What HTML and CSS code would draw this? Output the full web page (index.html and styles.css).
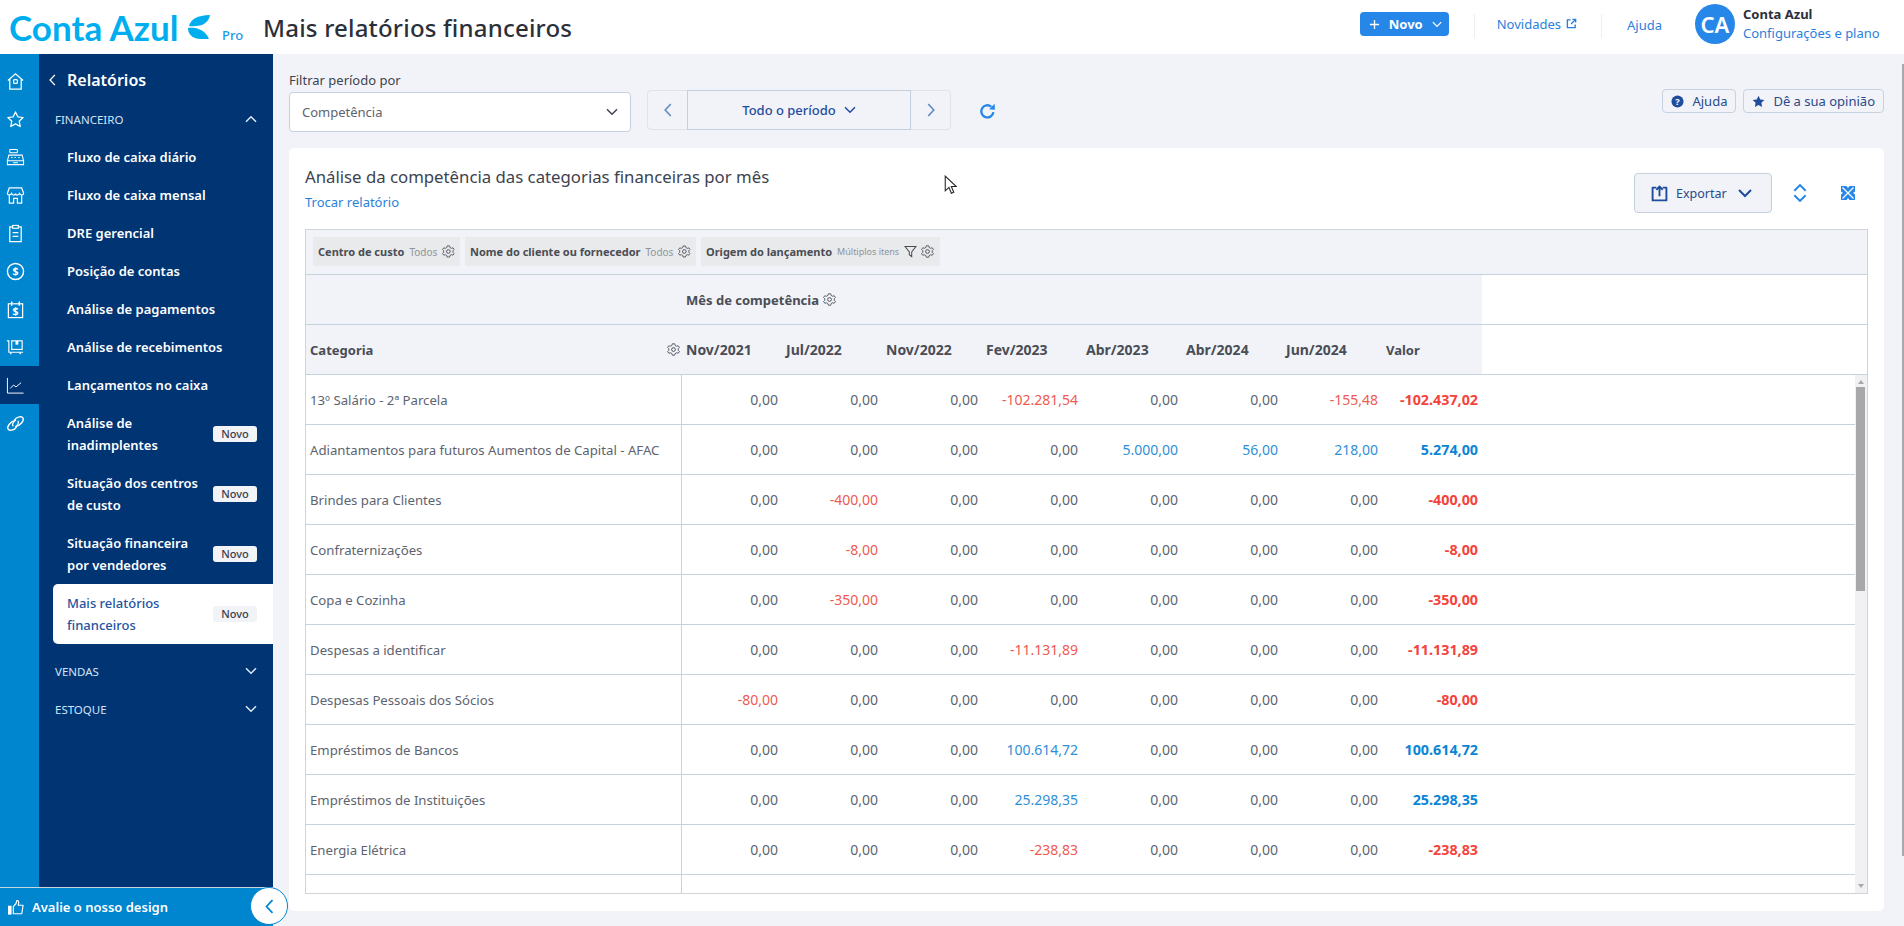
FILE: index.html
```html
<!DOCTYPE html>
<html lang="pt-BR">
<head>
<meta charset="utf-8">
<title>Mais relatórios financeiros</title>
<link rel="stylesheet" href="styles.css">
</head>
<body>
<svg class="defs" width="0" height="0" aria-hidden="true">
  <symbol id="gear" viewBox="0 0 16 16"><path d="M6.500 1H9.500L10 3L11.800 4L13.800 3.400L15.300 5.500L13.800 7V9L15.300 10.500L13.800 12.600L11.800 12L10 13L9.500 15H6.500L6 13L4.200 12L2.200 12.600L.7 10.500L2.200 9V7L.7 5.500L2.200 3.400L4.200 4L6 3Z" fill="none" stroke="currentColor" stroke-width="1.100" stroke-linejoin="round"/><circle cx="8" cy="8" r="2.300" fill="none" stroke="currentColor" stroke-width="1.200"/></symbol>
  <symbol id="chev-d" viewBox="0 0 12 8"><path d="M1 1.200l5 5 5-5" fill="none" stroke="currentColor" stroke-width="1.500"/></symbol>
  <symbol id="chev-u" viewBox="0 0 12 8"><path d="M1 6.800l5-5 5 5" fill="none" stroke="currentColor" stroke-width="1.500"/></symbol>
  <symbol id="chev-l" viewBox="0 0 8 14"><path d="M6.800 1L1.200 7l5.600 6" fill="none" stroke="currentColor" stroke-width="1.600"/></symbol>
  <symbol id="chev-r" viewBox="0 0 8 14"><path d="M1.200 1l5.600 6-5.600 6" fill="none" stroke="currentColor" stroke-width="1.600"/></symbol>
</svg>

<header class="topbar">
  <div class="brand">
    <span class="logo-text">Conta Azul</span>
    <svg class="logo-mark" viewBox="0 0 24 24"><path d="M3 11C5 4 11 .5 24 0c-.5 5-5 9.500-10 10.500C10 11.300 6 11.300 3 11z" fill="#00aeef"/><path d="M2 13c4-.4 8 0 11 1.200 5 1.800 8 5 10 9.800-9 .3-15 0-18-3.500C3 18.500 2 16 2 13z" fill="#00aeef"/></svg>
    <span class="logo-pro">Pro</span>
  </div>
  <h1 class="page-title">Mais relatórios financeiros</h1>
  <div class="top-actions">
    <button class="btn-new"><svg class="plus" viewBox="0 0 12 12"><path d="M6 1v10M1 6h10" stroke="#fff" stroke-width="1.500"/></svg><span>Novo</span><svg class="ic-9" width="10" height="7"><use href="#chev-d"/></svg></button>
    <span class="vline vline-a"></span>
    <a class="top-link novidades">Novidades <svg class="ext" viewBox="0 0 12 12"><path d="M5 2H1.500v8.500H10V7M7 1.500h3.500V5M10.500 1.500L5.500 6.500" fill="none" stroke="currentColor" stroke-width="1.500"/></svg></a>
    <span class="vline vline-b"></span>
    <a class="top-link ajuda-top">Ajuda</a>
    <span class="avatar">CA</span>
    <div class="user">
      <strong>Conta Azul</strong>
      <a>Configurações e plano</a>
    </div>
  </div>
</header>

<div class="shell">
  <aside class="rail">
    <ul class="rail-list">
      <li><svg viewBox="0 0 20 20"><path d="M2 9l8-7 8 7M4 7.500V18h12V7.500" fill="none" stroke="#fff" stroke-width="1.300"/><rect x="8" y="8" width="4" height="4" rx="1" fill="none" stroke="#fff" stroke-width="1.300"/></svg></li>
      <li><svg viewBox="0 0 20 20"><path d="M10 2l2.400 5.200 5.600.7-4.100 3.900 1.100 5.600-5-2.800-5 2.800 1.100-5.600L2 7.900l5.600-.7z" fill="none" stroke="#fff" stroke-width="1.300" stroke-linejoin="round"/></svg></li>
      <li><svg viewBox="0 0 20 20"><rect x="4" y="1.500" width="8" height="3.500" rx=".7" fill="none" stroke="#fff" stroke-width="1.100"/><path d="M3 7.500h14l1.500 6H1.500zM1.500 13.500h17v4h-17z" fill="none" stroke="#fff" stroke-width="1.100"/><path d="M5.500 10h1.500M9 10h1.500M13 10h1.500M7.500 15.500h5" stroke="#fff" stroke-width="1.100"/></svg></li>
      <li><svg viewBox="0 0 20 20"><path d="M3.500 2h13l2 5.500c0 2.500-3.500 2.500-4.300.5-.8 2-3.700 2-4.200 0-.5 2-3.400 2-4.200 0-.8 2-4.300 2-4.300-.5zM3.500 10v8h4.500v-5h4v5h4.500v-8" fill="none" stroke="#fff" stroke-width="1.300"/></svg></li>
      <li><svg viewBox="0 0 20 20"><path d="M7 3H4v15.500h12V3h-3" fill="none" stroke="#fff" stroke-width="1.300"/><rect x="7" y="1.500" width="6" height="3" fill="none" stroke="#fff" stroke-width="1.200"/><path d="M7 9h6M7 13h6" stroke="#fff" stroke-width="1.300"/></svg></li>
      <li><svg viewBox="0 0 20 20"><circle cx="10" cy="10" r="8.500" fill="none" stroke="#fff" stroke-width="1.500"/><text x="10" y="14" class="dollar">$</text></svg></li>
      <li><svg viewBox="0 0 20 20"><rect x="2.500" y="4" width="15" height="14.500" fill="none" stroke="#fff" stroke-width="1.300"/><path d="M6 1.500V6M14 1.500V6" stroke="#fff" stroke-width="1.500"/><text x="10" y="15.500" class="dollar">$</text></svg></li>
      <li><svg viewBox="0 0 20 20"><path d="M1 3h2v12h15" fill="none" stroke="#fff" stroke-width="1.200"/><rect x="6" y="3" width="11" height="9" fill="none" stroke="#fff" stroke-width="1.200"/><rect x="10" y="3" width="3" height="4" fill="#fff"/><path d="M5 15v2M15 15v2" stroke="#fff" stroke-width="1.500"/></svg></li>
      <li class="rail-on"><svg viewBox="0 0 20 20"><path d="M1.500 2v16h17" fill="none" stroke="#fff" stroke-width="1"/><path d="M4.500 13l3.500-3.500 2.500 2 5.500-4.500" fill="none" stroke="#fff" stroke-width="1"/></svg></li>
      <li><svg viewBox="0 0 20 20"><path d="M9 6.500C11 2.500 17 2 18 4.500s-3 8-7.500 8.500M11 13.500C9 17.500 3 18 2 15.500S5 7.500 9.500 7" fill="none" stroke="#fff" stroke-width="1.500" stroke-linecap="round"/><path d="M7.500 13c-1.500-2 .5-6 3-6.500M12.500 7c1.500 2-.5 6-3 6.500" fill="none" stroke="#fff" stroke-width="1.300"/></svg></li>
    </ul>
  </aside>

  <nav class="sidenav">
    <div class="nav-head"><svg class="back" width="7" height="12"><use href="#chev-l"/></svg><span>Relatórios</span></div>
    <div class="nav-group"><span>FINANCEIRO</span><svg width="12" height="8"><use href="#chev-u"/></svg></div>
    <ul class="nav-items">
      <li>Fluxo de caixa diário</li>
      <li>Fluxo de caixa mensal</li>
      <li>DRE gerencial</li>
      <li>Posição de contas</li>
      <li>Análise de pagamentos</li>
      <li>Análise de recebimentos</li>
      <li>Lançamentos no caixa</li>
      <li class="two"><span>Análise de<br>inadimplentes</span><em>Novo</em></li>
      <li class="two"><span>Situação dos centros<br>de custo</span><em>Novo</em></li>
      <li class="two"><span>Situação financeira<br>por vendedores</span><em>Novo</em></li>
      <li class="two active"><span>Mais relatórios<br>financeiros</span><em>Novo</em></li>
    </ul>
    <div class="nav-group"><span>VENDAS</span><svg width="12" height="8"><use href="#chev-d"/></svg></div>
    <div class="nav-group"><span>ESTOQUE</span><svg width="12" height="8"><use href="#chev-d"/></svg></div>
  </nav>

  <main class="content">
    <div class="filters">
      <div class="period-by">
        <label>Filtrar período por</label>
        <div class="select"><span>Competência</span><svg width="12" height="8"><use href="#chev-d"/></svg></div>
      </div>
      <div class="pager">
        <span class="pg-side"><svg width="8" height="14"><use href="#chev-l"/></svg></span>
        <span class="pg-mid">Todo o período <svg width="12" height="8"><use href="#chev-d"/></svg></span>
        <span class="pg-side"><svg width="8" height="14"><use href="#chev-r"/></svg></span>
      </div>
      <svg class="refresh" viewBox="0 0 16 16"><path d="M13.500 8.500A5.700 5.700 0 1 1 11.500 3.500" fill="none" stroke="#2687e9" stroke-width="2.200"/><path d="M9.500 5.800L15 6.300 14.700.8z" fill="#2687e9"/></svg>
      <div class="help-btns">
        <button class="ghost"><svg viewBox="0 0 14 14"><circle cx="7" cy="7" r="6.500" fill="#1f4c9c"/><text x="7" y="10.500" class="q">?</text></svg>Ajuda</button>
        <button class="ghost"><svg viewBox="0 0 14 14"><path d="M7 .8l1.900 4 4.400.6-3.200 3 .8 4.400L7 10.700l-3.900 2.100.8-4.400-3.200-3 4.400-.6z" fill="#1f4c9c"/></svg>Dê a sua opinião</button>
      </div>
    </div>

    <section class="card">
      <div class="card-head">
        <div>
          <h2>Análise da competência das categorias financeiras por mês</h2>
          <a class="swap">Trocar relatório</a>
        </div>
        <div class="card-tools">
          <button class="export"><svg class="up" viewBox="0 0 16 16"><path d="M5 2.500H1.500v12h13v-12H11" fill="none" stroke="#1f4c9c" stroke-width="1.800" stroke-linejoin="round"/><path d="M8 10.500V1.500M5 4.500L8 1.500l3 3" fill="none" stroke="#1f4c9c" stroke-width="1.800"/></svg>Exportar<svg class="exp-ch" viewBox="0 0 14 9"><path d="M1 1l6 6 6-6" fill="none" stroke="#1f4c9c" stroke-width="2"/></svg></button>
          <svg class="tool expand" viewBox="0 0 12 16"><path d="M1 6l5-5 5 5M1 10l5 5 5-5" fill="none" stroke="#2687e9" stroke-width="1.800"/></svg>
          <svg class="tool full" viewBox="0 0 14 14"><rect width="14" height="14" fill="#2687e9"/><path d="M1.500 1.500l11 11M12.500 1.500l-11 11" stroke="#fff" stroke-width="1.200"/><path d="M7 2L5.500 0h3zM7 12l-1.500 2h3zM2 7L0 5.500v3zM12 7l2-1.500v3z" fill="#fff"/></svg>
        </div>
      </div>

      <div class="pivot">
        <div class="chips">
          <span class="chip c1"><b>Centro de custo</b><i>Todos</i><svg><use href="#gear"/></svg></span>
          <span class="chip c2"><b>Nome do cliente ou fornecedor</b><i>Todos</i><svg><use href="#gear"/></svg></span>
          <span class="chip c3"><b>Origem do lançamento</b><i class="mini">Múltiplos itens</i><svg class="funnel" viewBox="0 0 14 14"><path d="M1 1.500h12L8.300 7.500v5L5.700 10.500v-3z" fill="none" stroke="currentColor" stroke-width="1.100"/></svg><svg><use href="#gear"/></svg></span>
        </div>
        <div class="hrow hrow-month"><div class="hband"><span class="hmonth">Mês de competência</span><svg><use href="#gear"/></svg></div></div>
        <div class="hrow hrow-cols"><div class="hband cols">
          <span class="hcat">Categoria<svg><use href="#gear"/></svg></span>
          <span class="m">Nov/2021</span><span class="m">Jul/2022</span><span class="m">Nov/2022</span><span class="m">Fev/2023</span><span class="m">Abr/2023</span><span class="m">Abr/2024</span><span class="m">Jun/2024</span><span>Valor</span>
        </div></div>
        <div class="body">
          <div class="rows">
            <div class="row"><span class="cat">13º Salário - 2ª Parcela</span><span>0,00</span><span>0,00</span><span>0,00</span><span class="neg">-102.281,54</span><span>0,00</span><span>0,00</span><span class="neg">-155,48</span><span class="tot neg">-102.437,02</span></div>
            <div class="row"><span class="cat">Adiantamentos para futuros Aumentos de Capital - AFAC</span><span>0,00</span><span>0,00</span><span>0,00</span><span>0,00</span><span class="pos">5.000,00</span><span class="pos">56,00</span><span class="pos">218,00</span><span class="tot pos">5.274,00</span></div>
            <div class="row"><span class="cat">Brindes para Clientes</span><span>0,00</span><span class="neg">-400,00</span><span>0,00</span><span>0,00</span><span>0,00</span><span>0,00</span><span>0,00</span><span class="tot neg">-400,00</span></div>
            <div class="row"><span class="cat">Confraternizações</span><span>0,00</span><span class="neg">-8,00</span><span>0,00</span><span>0,00</span><span>0,00</span><span>0,00</span><span>0,00</span><span class="tot neg">-8,00</span></div>
            <div class="row"><span class="cat">Copa e Cozinha</span><span>0,00</span><span class="neg">-350,00</span><span>0,00</span><span>0,00</span><span>0,00</span><span>0,00</span><span>0,00</span><span class="tot neg">-350,00</span></div>
            <div class="row"><span class="cat">Despesas a identificar</span><span>0,00</span><span>0,00</span><span>0,00</span><span class="neg">-11.131,89</span><span>0,00</span><span>0,00</span><span>0,00</span><span class="tot neg">-11.131,89</span></div>
            <div class="row"><span class="cat">Despesas Pessoais dos Sócios</span><span class="neg">-80,00</span><span>0,00</span><span>0,00</span><span>0,00</span><span>0,00</span><span>0,00</span><span>0,00</span><span class="tot neg">-80,00</span></div>
            <div class="row"><span class="cat">Empréstimos de Bancos</span><span>0,00</span><span>0,00</span><span>0,00</span><span class="pos">100.614,72</span><span>0,00</span><span>0,00</span><span>0,00</span><span class="tot pos">100.614,72</span></div>
            <div class="row"><span class="cat">Empréstimos de Instituições</span><span>0,00</span><span>0,00</span><span>0,00</span><span class="pos">25.298,35</span><span>0,00</span><span>0,00</span><span>0,00</span><span class="tot pos">25.298,35</span></div>
            <div class="row"><span class="cat">Energia Elétrica</span><span>0,00</span><span>0,00</span><span>0,00</span><span class="neg">-238,83</span><span>0,00</span><span>0,00</span><span>0,00</span><span class="tot neg">-238,83</span></div>
            <div class="row row-stub"><span class="cat"></span></div>
          </div>
          <div class="vscroll"><i class="arrow-up"></i><b></b><i class="arrow-down"></i></div>
        </div>
      </div>
    </section>
  </main>
</div>

<footer class="rate">
  <svg class="thumb" viewBox="0 0 18 16"><rect x="0" y="6" width="4" height="10" fill="#fff"/><path d="M6 7l3-3.500L10 0c2 0 2.500 2 1.500 5.500H17l-1.500 9.500H6z" fill="none" stroke="#fff" stroke-width="1.300" stroke-linejoin="round"/></svg>
  <span>Avalie o nosso design</span>
</footer>
<button class="collapse"><svg width="9" height="15"><use href="#chev-l"/></svg></button>
<div class="page-scroll"></div>
<svg class="cursor" viewBox="0 0 12 19"><path d="M1 1v14l3.500-3.200 2.300 5.600 2.300-1-2.300-5.400h4.700z" fill="#fff" stroke="#222" stroke-width="1"/></svg>
</body>
</html>
```

FILE: styles.css
```css
* { box-sizing: border-box; }
html, body { margin: 0; height: 926px; overflow: hidden; }
body { font-family: "Noto Sans", "Open Sans", sans-serif; font-size: 13px; color: #3d4350; background: #f1f3f8; position: relative; }
.defs { position: absolute; }
ul { list-style: none; margin: 0; padding: 0; }
button { font-family: inherit; cursor: pointer; }

/* top bar */
.topbar { height: 54px; background: #fff; display: flex; align-items: center; padding-left: 9px; }
.brand { display: flex; align-items: flex-start; width: 254px; height: 40px; position: relative; }
.logo-text { font-family: Lato, sans-serif; font-weight: 700; font-size: 35px; line-height: 40px; letter-spacing: 0; color: #00aeef; width: 177px; white-space: nowrap; }
.logo-mark { width: 24px; height: 24px; margin-top: 8px; }
.logo-pro { font-size: 13px; font-weight: 500; color: #1b9ae4; margin: 19px 0 0 12px; line-height: 18px; }
.page-title { margin: 0; font-size: 24px; font-weight: 500; color: #2b303b; letter-spacing: .2px; }
.top-actions { margin-left: auto; display: flex; align-items: center; height: 54px; }
.btn-new { display: flex; align-items: center; width: 89px; height: 24px; padding: 0 0 0 9px; background: #2687e9; color: #fff; border: 0; border-radius: 4px; font-size: 13px; font-weight: 700; margin-bottom: 6px; }
.btn-new .plus { width: 11px; height: 11px; margin-right: 9px; }
.btn-new .ic-9 { margin-left: 9px; }
.vline { width: 1px; height: 24px; background: #eceef3; margin-bottom: 2px; }
.vline-a { margin-left: 25px; }
.top-link { color: #2b7fdc; font-size: 13px; white-space: nowrap; }
.novidades { margin-left: 22px; display: flex; align-items: center; gap: 5px; margin-bottom: 7px; }
.ext { width: 11px; height: 11px; }
.vline-b { margin-left: 24px; }
.ajuda-top { margin-left: 25px; margin-bottom: 5px; }
.avatar { margin-left: 33px; width: 40px; height: 40px; border-radius: 50%; background: #2687e9; color: #fff; font-size: 22px; font-weight: 600; display: flex; align-items: center; justify-content: center; margin-bottom: 6px; }
.user { margin-left: 8px; width: 161px; display: flex; flex-direction: column; gap: 1px; margin-bottom: 6px; }
.user strong { font-size: 13px; font-weight: 700; color: #2b303b; line-height: 18px; }
.user a { font-size: 13px; color: #2b7fdc; line-height: 19px; white-space: nowrap; }

/* shell */
.shell { display: flex; height: 872px; }
.rail { width: 39px; background: #0085cf; flex: none; }
.rail-list li { height: 38px; display: flex; align-items: center; padding-left: 6px; }
.rail-list { padding-top: 8px; }
.rail-list svg { width: 19px; height: 19px; }
.rail-on { background: #003473; }
.dollar { font: 700 11px "Noto Sans", sans-serif; fill: #fff; text-anchor: middle; }
.q { font: 700 10px "Noto Sans", sans-serif; fill: #fff; text-anchor: middle; }

.sidenav { width: 234px; background: #003473; color: #fff; flex: none; }
.nav-head { height: 46px; display: flex; align-items: center; padding: 6px 0 0 10px; font-size: 16px; font-weight: 600; }
.back { margin-right: 11px; color: #fff; }
.nav-group { height: 38px; display: flex; align-items: center; justify-content: space-between; padding: 0 16px 0 16px; font-size: 11.500px; color: #cfe4fb; }
.nav-group svg { color: #dfeaf7; }
.nav-items { margin-bottom: 8px; }
.nav-items li { min-height: 38px; display: flex; align-items: center; padding: 0 16px 0 28px; font-weight: 600; justify-content: space-between; margin-top: 0; white-space: nowrap; }
.nav-items li.two { height: 60px; line-height: 22px; }
.nav-items em { font-style: normal; font-weight: 500; font-size: 11px; color: #3d3f4d; background: #f1f3f7; width: 44px; height: 16px; border-radius: 3px; display: flex; align-items: center; justify-content: center; }
.nav-items .active { background: #fff; color: #24539f; margin-left: 14px; padding-left: 14px; border-radius: 5px 0 0 5px; font-weight: 500; }

/* content */
.content { flex: 1; padding: 0 20px 0 16px; min-width: 0; }
.filters { display: flex; align-items: flex-start; height: 94px; padding-top: 16px; }
.period-by { width: 342px; }
.period-by label { display: block; line-height: 21px; height: 22px; color: #3d4350; }
.select { height: 40px; background: #fff; border: 1px solid #c5d0de; border-radius: 4px; display: flex; align-items: center; justify-content: space-between; padding: 0 12px; color: #5d6470; }
.select svg { color: #3d4350; }
.pager { margin: 20px 0 0 16px; width: 304px; height: 40px; display: flex; border: 1px solid #dde3ea; border-radius: 4px; }
.pg-side { width: 39px; display: flex; align-items: center; justify-content: center; color: #5f8bc4; }
.pg-mid { flex: 1; border: 1px solid #c5d0de; margin: -1px 0; display: flex; align-items: center; justify-content: center; gap: 8px; color: #1f4c9c; font-weight: 500; }
.refresh { width: 17px; height: 17px; margin: 33px 0 0 28px; }
.help-btns { margin-left: auto; margin-top: 19px; display: flex; gap: 7px; }
.ghost { height: 24px; border: 1px solid #c8d2de; border-radius: 4px; background: transparent; color: #2a4a8a; font-size: 13px; display: flex; align-items: center; gap: 8px; padding: 0 8px; }
.ghost svg { width: 13px; height: 13px; }

.card { background: #fff; border-radius: 5px; height: 763px; padding: 0 16px; }
.card-head { height: 81px; display: flex; justify-content: space-between; }
.card-head h2 { margin: 0; padding-top: 17px; font-size: 16.750px; font-weight: 400; line-height: 24px; color: #3d4350; }
.swap { display: block; margin-top: 4px; color: #2b7fdc; line-height: 18px; }
.card-tools { display: flex; align-items: center; height: 40px; margin-top: 25px; }
.export { width: 138px; height: 40px; background: #f1f3f8; border: 1px solid #c5d0de; border-radius: 4px; color: #2a4a8a; font-size: 12.500px; display: flex; align-items: center; padding: 0 0 0 16px; }
.up { width: 17px; height: 17px; margin-right: 8px; }
.exp-ch { width: 14px; height: 9px; margin-left: 11px; }
.expand { width: 14px; height: 18px; margin-left: 21px; }
.full { width: 14px; height: 14px; margin-left: 34px; margin-right: 13px; }

/* pivot */
.pivot { height: 665px; border: 1px solid #cfd4d8; display: flex; flex-direction: column; overflow: hidden; }
.chips { height: 45px; flex: none; background: #f1f3f8; border-bottom: 1px solid #c5d3df; display: flex; gap: 5px; padding: 7px 0 0 7px; }
.chip { height: 29px; background: #e8eaec; display: flex; align-items: center; padding: 0 5px; white-space: nowrap; font-size: 11px; color: #4a4d55; }
.chip b { font-weight: 700; }
.chip i { font-style: normal; color: #8f949b; font-size: 10px; margin-left: 5px; }
.chip i.mini { font-size: 9px; }
.chip svg { width: 13px; height: 13px; margin-left: 5px; color: #4a4d55; }
.chip .funnel { margin-right: -1px; }
.c1 { width: 147px; } .c2 { width: 231px; } .c3 { width: 239px; }
.hrow { height: 50px; flex: none; border-bottom: 1px solid #c5d3df; display: flex; }
.hband { width: 1176px; height: 49px; background: #f1f3f8; display: flex; align-items: center; font-weight: 700; color: #4a4d55; }
.hmonth { margin-left: 380px; }
.hband svg { width: 13px; height: 13px; margin-left: 4px; color: #4a4d55; }
.cols span { width: 100px; flex: none; }
.cols .m { font-size: 14px; }
.cols .hcat { width: 380px; padding-left: 4px; display: flex; align-items: center; justify-content: space-between; padding-right: 6px; }
.body { flex: 1; display: flex; min-height: 0; }
.rows { flex: 1; min-width: 0; }
.row { height: 50px; display: grid; grid-template-columns: 376px repeat(8, 100px); align-items: stretch; border-bottom: 1px solid #c5d3df; color: #5d6470; font-size: 14px; font-weight: 400; }
.row span { display: flex; align-items: center; justify-content: flex-end; padding-right: 4px; }
.row .cat { justify-content: flex-start; padding: 0 0 0 4px; border-right: 1px solid #c5d3df; white-space: nowrap; font-size: 13.200px; font-weight: 400; }
.row-stub { border-bottom: 0; height: 20px; }
.neg { color: #ee5a52; }
.pos { color: #2f8fd6; }
.row .tot { font-weight: 700; font-size: 14.300px; }
.tot.neg { color: #f4433b; }
.tot.pos { color: #0b85d6; }
.vscroll { width: 12px; flex: none; background: #f1f1f4; position: relative; padding: 12px 2px 0 1px; }
.vscroll b { display: block; height: 204px; background: #a8a8ab; }
.vscroll i { position: absolute; left: 3px; width: 0; height: 0; border-left: 3px solid transparent; border-right: 3px solid transparent; }
.arrow-up { top: 5px; border-bottom: 4px solid #a8a8ab; }
.arrow-down { bottom: 5px; border-top: 4px solid #a8a8ab; }

/* overlays */
.rate { position: absolute; left: 0; bottom: 0; width: 273px; height: 39px; background: #0085cf; border-top: 1px solid #c8d4de; display: flex; align-items: center; padding-left: 8px; color: #fff; font-weight: 600; }
.thumb { width: 16px; height: 15px; margin-right: 8px; }
.collapse { position: absolute; left: 250px; top: 887px; width: 38px; height: 38px; border-radius: 50%; background: #fff; border: 1.500px solid #0085cf; color: #0085cf; display: flex; align-items: center; justify-content: center; padding: 0; }
.page-scroll { position: absolute; right: 0; top: 64px; width: 2px; height: 792px; background: #a8a8ab; }
.cursor { position: absolute; left: 944px; top: 175px; width: 13px; height: 20px; }
```
